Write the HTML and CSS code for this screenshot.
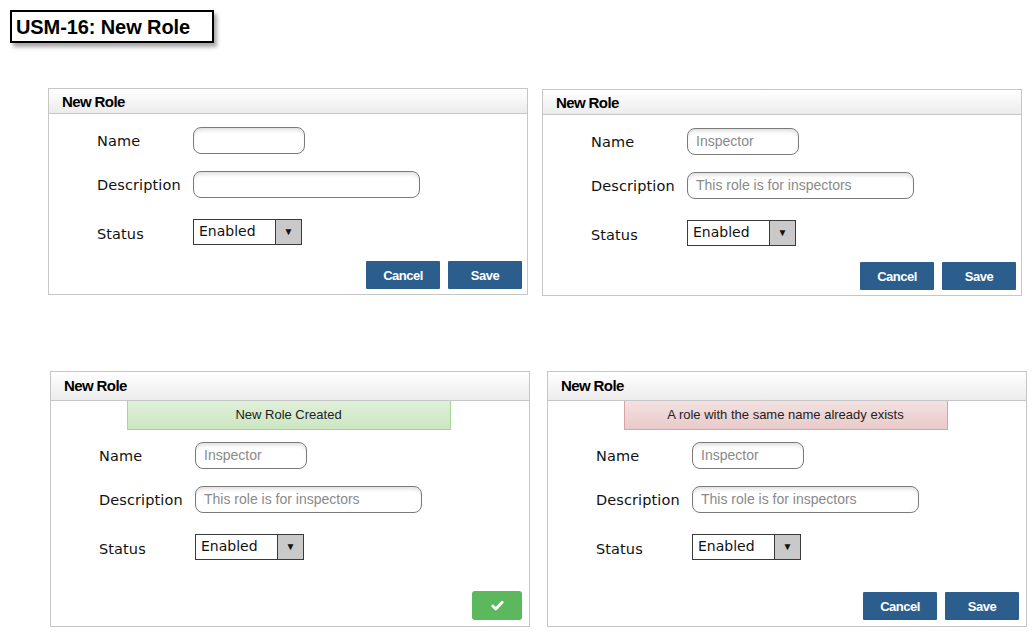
FILE: index.html
```html
<!DOCTYPE html>
<html>
<head>
<meta charset="utf-8">
<link rel="stylesheet" href="styles.css">
</head>
<body>
<div class="title">USM-16: New Role</div>

<div class="row row-top">
  <section class="panel panel-short">
    <header class="panel-head">New Role</header>
    <div class="form">
      <span class="label">Name</span>
      <span class="input input-name"></span>
      <span class="label">Description</span>
      <span class="input input-desc"></span>
      <span class="label label-status">Status</span>
      <span class="select"><span class="select-text">Enabled</span><span class="select-arrow">&#9660;</span></span>
    </div>
    <div class="actions">
      <button class="btn">Cancel</button>
      <button class="btn">Save</button>
    </div>
  </section>

  <section class="panel panel-short panel-shift">
    <header class="panel-head">New Role</header>
    <div class="form">
      <span class="label">Name</span>
      <span class="input input-name">Inspector</span>
      <span class="label">Description</span>
      <span class="input input-desc">This role is for inspectors</span>
      <span class="label label-status">Status</span>
      <span class="select"><span class="select-text">Enabled</span><span class="select-arrow">&#9660;</span></span>
    </div>
    <div class="actions">
      <button class="btn">Cancel</button>
      <button class="btn">Save</button>
    </div>
  </section>
</div>

<div class="row row-bottom">
  <section class="panel panel-tall">
    <header class="panel-head panel-head-tall">New Role</header>
    <div class="banner banner-ok">New Role Created</div>
    <div class="form form-tight">
      <span class="label">Name</span>
      <span class="input input-name">Inspector</span>
      <span class="label">Description</span>
      <span class="input input-desc">This role is for inspectors</span>
      <span class="label label-status">Status</span>
      <span class="select"><span class="select-text">Enabled</span><span class="select-arrow">&#9660;</span></span>
    </div>
    <div class="actions actions-bottom">
      <button class="btn btn-ok" aria-label="OK"><svg width="13" height="11" viewBox="0 0 13 11"><path d="M1.8 6 L4.8 9 L11.2 2.2" fill="none" stroke="#fff" stroke-width="2.8" stroke-linecap="round" stroke-linejoin="round"/></svg></button>
    </div>
  </section>

  <section class="panel panel-tall">
    <header class="panel-head panel-head-tall">New Role</header>
    <div class="banner banner-err">A role with the same name already exists</div>
    <div class="form form-tight">
      <span class="label">Name</span>
      <span class="input input-name">Inspector</span>
      <span class="label">Description</span>
      <span class="input input-desc">This role is for inspectors</span>
      <span class="label label-status">Status</span>
      <span class="select"><span class="select-text">Enabled</span><span class="select-arrow">&#9660;</span></span>
    </div>
    <div class="actions actions-bottom">
      <button class="btn">Cancel</button>
      <button class="btn">Save</button>
    </div>
  </section>
</div>
</body>
</html>
```

FILE: styles.css
```css
* { box-sizing: border-box; }

body {
  margin: 0;
  background: #fff;
  font-family: "Liberation Sans", Arial, sans-serif;
  color: #000;
}

.title {
  margin: 10px 0 0 10px;
  width: 204px;
  height: 33px;
  border: 2px solid #000;
  box-shadow: 3px 4px 4px rgba(0, 0, 0, 0.35);
  font-weight: bold;
  font-size: 20px;
  line-height: 30px;
  padding-left: 4px;
  letter-spacing: -0.1px;
}

.row {
  display: flex;
  align-items: flex-start;
}

.row-top {
  margin-top: 45px;
  padding-left: 48px;
  gap: 14px;
}

.row-bottom {
  margin-top: 75px;
  padding-left: 50px;
  gap: 17px;
}

.panel {
  width: 480px;
  border: 1px solid #c6c6c6;
  background: #fff;
  display: flex;
  flex-direction: column;
}

.panel-shift { margin-top: 1px; }

.panel-short { height: 207px; }
.panel-tall { height: 256px; }

.panel-head {
  height: 25px;
  border-bottom: 1px solid #c6c6c6;
  background: linear-gradient(#ffffff, #ececec);
  font-weight: bold;
  font-size: 15px;
  letter-spacing: -0.6px;
  line-height: 25px;
  padding-left: 13px;
}

.panel-head-tall {
  height: 29px;
  line-height: 27px;
}

.banner {
  align-self: center;
  width: 324px;
  height: 29px;
  margin-left: -3px;
  font-size: 13px;
  line-height: 27px;
  text-align: center;
  color: #222;
  border: 1px solid;
  border-top: none;
}

.banner-ok {
  background: linear-gradient(#e0f0da, #cbe6c1);
  border-color: #a6d59a;
}

.banner-err {
  background: linear-gradient(#f3e1e1, #e9caca);
  border-color: #d9a3a3;
}

.form {
  display: grid;
  grid-template-columns: 96px auto;
  grid-template-rows: 27px 27px 26px;
  row-gap: 17px;
  align-items: center;
  justify-items: start;
  padding: 13px 0 0 48px;
}

.form-tight {
  padding-top: 12px;
}

.form > :nth-child(5),
.form > :nth-child(6) {
  margin-top: 8px;
}

.label {
  font-family: "DejaVu Sans", sans-serif;
  font-size: 14.5px;
  letter-spacing: 0.1px;
  color: #111;
}

.label-status { padding-top: 4px; }

.input {
  display: block;
  height: 27px;
  border: 1.5px solid #7a7a7a;
  border-radius: 8px;
  background: #fff;
  box-shadow: inset 0 4px 4px -2px rgba(0, 0, 0, 0.14);
  font-size: 14px;
  line-height: 25px;
  color: #8a8a8a;
  padding-left: 8px;
  white-space: nowrap;
}

.input-name { width: 112px; }
.input-desc { width: 227px; }

.select {
  display: flex;
  width: 109px;
  height: 26px;
  border: 1px solid #3a3a3a;
  background: #fff;
}

.select-text {
  flex: 1;
  font-family: "DejaVu Sans", sans-serif;
  font-size: 14px;
  line-height: 23px;
  padding-left: 5px;
  color: #111;
}

.select-arrow {
  width: 26px;
  border-left: 1px solid #3a3a3a;
  background: #c9c9c9;
  font-size: 10px;
  line-height: 24px;
  text-align: center;
  color: #111;
}

.actions {
  margin-top: auto;
  display: flex;
  justify-content: flex-end;
  gap: 8px;
  padding: 0 5px 5px 0;
}

.actions-bottom {
  padding: 0 7px 6px 0;
}

.btn {
  width: 74px;
  height: 28px;
  border: none;
  border-radius: 1px;
  background: #2b5e8c;
  color: #fff;
  font-family: "Liberation Sans", Arial, sans-serif;
  font-weight: bold;
  font-size: 13px;
  letter-spacing: -0.5px;
  padding: 0;
  margin: 0;
}

.btn-ok {
  width: 50px;
  height: 29px;
  border-radius: 3px;
  background: #5cb85c;
  display: flex;
  align-items: center;
  justify-content: center;
}
```
